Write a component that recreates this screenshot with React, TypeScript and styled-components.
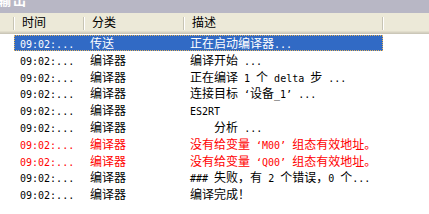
import React from "react";
import styled, { createGlobalStyle } from "styled-components";

const Global = createGlobalStyle`
  html, body { margin: 0; padding: 0; background: #fff; }
  body { width: 429px; height: 214px; overflow: hidden; }
`;

const Panel = styled.div`
  width: 429px;
  height: 214px;
  overflow: hidden;
  background: #fff;
  display: flex;
  flex-direction: column;
  font-family: "Noto Sans CJK SC", sans-serif;
  font-size: 12px;
  color: #000;
`;

const TitleBar = styled.div`
  height: 13px;
  flex: none;
  background: #b8b7c5;
  overflow: hidden;
  display: flex;
`;

const TitleText = styled.span`
  color: #fff;
  font-weight: bold;
  font-size: 13px;
  line-height: 13px;
  margin-top: -7px;
  margin-left: -2px;
  letter-spacing: 2px;
`;

const Header = styled.div`
  height: 21px;
  flex: none;
  display: grid;
  grid-template-columns: 14px 70px 100px 199px 1fr;
  background: linear-gradient(
    to bottom,
    #ece9d8 0,
    #ece9d8 18px,
    #e2decd 18px,
    #e2decd 19px,
    #d6d2c2 19px,
    #d6d2c2 20px,
    #cbc7b8 20px
  );
`;

const HeadCell = styled.div<{ $divider?: boolean }>`
  position: relative;
  height: 18px;
  line-height: 18px;
  padding-left: 8px;
  white-space: pre;
  &::after {
    content: "";
    display: ${(p) => (p.$divider ? "block" : "none")};
    position: absolute;
    right: 0;
    top: 4px;
    bottom: 1px;
    width: 1px;
    background: #c7c4b4;
    box-shadow: 1px 0 0 #ffffff;
  }
`;

const Body = styled.div`
  display: flex;
  flex-direction: column;
  padding-top: 1px;
`;

const Row = styled.div`
  height: 16.8px;
  flex: none;
  display: flex;
`;

const Gutter = styled.div`
  width: 14px;
  flex: none;
`;

const Band = styled.div<{ $selected?: boolean; $error?: boolean }>`
  display: grid;
  grid-template-columns: 70px 100px 199px;
  width: 369px;
  box-sizing: border-box;
  height: 16px;
  background: ${(p) => (p.$selected ? "#316ac5" : "transparent")};
  border: 1px dotted ${(p) => (p.$selected ? "#e4b35c" : "transparent")};
  color: ${(p) => (p.$selected ? "#fff" : p.$error ? "#ff0000" : "#000")};
`;

const Cell = styled.div`
  padding-left: 5px;
  line-height: 14px;
  white-space: pre;
`;

const Lat = styled.span`
  font-family: "DejaVu Sans Mono", "Liberation Mono", monospace;
  font-size: 10px;
`;

const Mixed: React.FC<{ text: string }> = ({ text }) => {
  const parts = text.split(/([\x20-\x7e\u2018\u2019]+)/);
  return (
    <>
      {parts.map((p, i) =>
        p === "" ? null : i % 2 === 1 ? <Lat key={i}>{p}</Lat> : <span key={i}>{p}</span>
      )}
    </>
  );
};

type Entry = { time: string; cat: string; desc: string; selected?: boolean; error?: boolean };

const rows: Entry[] = [
  { time: "09:02:...", cat: "传送", desc: "正在启动编译器...", selected: true },
  { time: "09:02:...", cat: "编译器", desc: "编译开始 ..." },
  { time: "09:02:...", cat: "编译器", desc: "正在编译 1 个 delta 步 ..." },
  { time: "09:02:...", cat: "编译器", desc: "连接目标 \u2018设备_1\u2019 ..." },
  { time: "09:02:...", cat: "编译器", desc: "ES2RT" },
  { time: "09:02:...", cat: "编译器", desc: "    分析 ..." },
  { time: "09:02:...", cat: "编译器", desc: "没有给变量 \u2018M00\u2019 组态有效地址。", error: true },
  { time: "09:02:...", cat: "编译器", desc: "没有给变量 \u2018Q00\u2019 组态有效地址。", error: true },
  { time: "09:02:...", cat: "编译器", desc: "### 失败，有 2 个错误，0 个..." },
  { time: "09:02:...", cat: "编译器", desc: "编译完成！" },
];

export default function App() {
  return (
    <>
      <Global />
      <Panel>
        <TitleBar>
          <TitleText>输出</TitleText>
        </TitleBar>
        <Header>
          <HeadCell $divider />
          <HeadCell $divider>时间</HeadCell>
          <HeadCell $divider>分类</HeadCell>
          <HeadCell $divider>描述</HeadCell>
          <HeadCell />
        </Header>
        <Body>
          {rows.map((r, i) => (
            <Row key={i}>
              <Gutter />
              <Band $selected={r.selected} $error={r.error}>
                <Cell>
                  <Mixed text={r.time} />
                </Cell>
                <Cell>
                  <Mixed text={r.cat} />
                </Cell>
                <Cell>
                  <Mixed text={r.desc} />
                </Cell>
              </Band>
            </Row>
          ))}
        </Body>
      </Panel>
    </>
  );
}
